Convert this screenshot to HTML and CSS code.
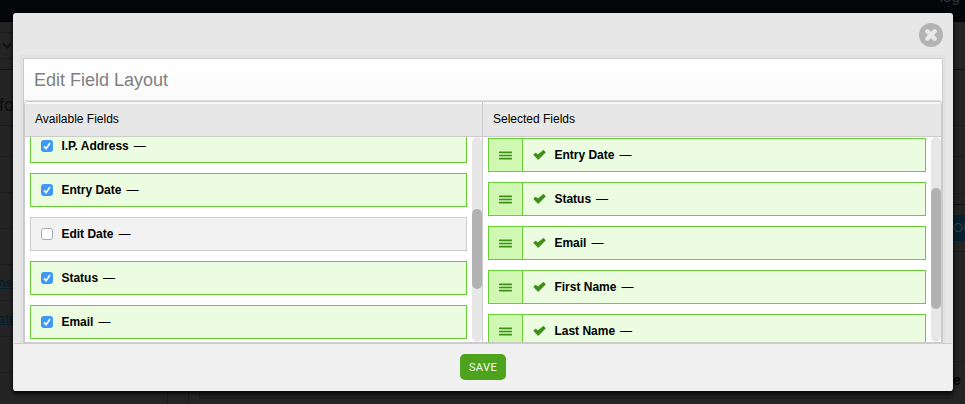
FILE: index.html
```
<!DOCTYPE html>
<html lang="en">
<head>
<meta charset="utf-8">
<title>Edit Field Layout</title>
<link rel="stylesheet" href="styles.css">
</head>
<body>
<svg class="defs" aria-hidden="true">
  <symbol id="check" viewBox="0 0 13 10"><path d="M1.1 4.9 L2.7 3.4 L4.9 5.3 L10.4 .7 L12 2.4 L5.2 9.1 Z" fill="#3f9019" stroke="#3f9019" stroke-width="1.3" stroke-linejoin="round"/></symbol>
  <symbol id="bars" viewBox="0 0 13 9"><path d="M.6 1.4h11.8M.6 4.5h11.8M.6 7.6h11.8" stroke="#3f9019" stroke-width="1.6" stroke-linecap="round"/></symbol>
  <symbol id="tick" viewBox="0 0 12 12"><path d="M3 6.4 L5.1 8.7 L9 3" fill="none" stroke="#fff" stroke-width="1.6"/></symbol>
</svg>
<div class="page">
  <header class="topbar"><span>log</span></header>
  <div class="page-body">
    <aside class="rail left">
      <div class="strip h11"></div>
      <div class="strip h26"><svg width="12" height="8" viewBox="0 0 12 8"><path d="M3 1.5 L7 5.5 L11 1.5" fill="none" stroke="#101010" stroke-width="2"/></svg></div>
      <div class="strip h11 dark"></div>
      <div class="strip h56 dotted"><b class="heading">fo</b></div>
      <div class="strip h31"></div><div class="strip h36"></div><div class="strip h36"></div><div class="strip h36"></div>
      <div class="strip h36"><a>ns</a></div><div class="strip h36"><a>ate</a></div><div class="strip h36"></div>
    </aside>
    <main class="canvas"><div class="gutter narrow"></div><div class="gutter"></div><div class="block"></div></main>
    <aside class="rail right">
      <div class="strip h48 dark"></div><div class="strip h56 dotted"></div><div class="strip h31"></div><div class="strip h37"></div>
      <div class="strip h11 dark"></div><div class="cta"><span>OU</span></div><div class="strip h10 dotted"></div><div class="strip h110"></div><div class="strip tail"><b>e</b></div>
    </aside>
  </div>
</div>
<section class="modal">
  <div class="modal-top">
    <button class="close" aria-label="Close"><svg width="24" height="24" viewBox="0 0 24 24"><circle cx="12" cy="12" r="12" fill="#b3b3b3"/><path d="M8.3 8.3 L15.7 15.7 M15.7 8.3 L8.3 15.7" stroke="#e8e8e8" stroke-width="4.4" stroke-linecap="round"/></svg></button>
  </div>
  <div class="panel">
    <h1>Edit Field Layout</h1>
    <div class="columns">
      <section class="column available">
        <h2>Available Fields</h2>
        <div class="viewport">
          <div class="list">
            <div class="field"><i class="box on"><svg><use href="#tick"/></svg></i><b>I.P. Address</b><span>—</span></div>
            <div class="field"><i class="box on"><svg><use href="#tick"/></svg></i><b>Entry Date</b><span>—</span></div>
            <div class="field off"><i class="box"></i><b>Edit Date</b><span>—</span></div>
            <div class="field"><i class="box on"><svg><use href="#tick"/></svg></i><b>Status</b><span>—</span></div>
            <div class="field"><i class="box on"><svg><use href="#tick"/></svg></i><b>Email</b><span>—</span></div>
          </div>
          <div class="scroll"><div class="thumb"></div></div>
        </div>
      </section>
      <section class="column selected">
        <h2>Selected Fields</h2>
        <div class="viewport">
          <div class="list">
            <div class="field"><i class="handle"><svg><use href="#bars"/></svg></i><svg class="check"><use href="#check"/></svg><b>Entry Date</b><span>—</span></div>
            <div class="field"><i class="handle"><svg><use href="#bars"/></svg></i><svg class="check"><use href="#check"/></svg><b>Status</b><span>—</span></div>
            <div class="field"><i class="handle"><svg><use href="#bars"/></svg></i><svg class="check"><use href="#check"/></svg><b>Email</b><span>—</span></div>
            <div class="field"><i class="handle"><svg><use href="#bars"/></svg></i><svg class="check"><use href="#check"/></svg><b>First Name</b><span>—</span></div>
            <div class="field"><i class="handle"><svg><use href="#bars"/></svg></i><svg class="check"><use href="#check"/></svg><b>Last Name</b><span>—</span></div>
          </div>
          <div class="scroll"><div class="thumb"></div></div>
        </div>
      </section>
    </div>
  </div>
  <footer><button class="save">SAVE</button></footer>
</section>
</body>
</html>
```
FILE: styles.css
```
* { box-sizing: border-box; }
body { margin: 0; width: 965px; height: 404px; overflow: hidden; position: relative; font: 12px "Liberation Sans", Arial, sans-serif; color: #000; }
.defs { position: absolute; width: 0; height: 0; }
.page { height: 404px; background: #242424; }
.topbar { height: 22px; background: #04060a; border-bottom: 1px solid #000; color: #343434; text-align: right; padding-right: 5px; overflow: hidden; }
.topbar span { display: block; font-size: 15px; line-height: 16px; margin-top: -11px; letter-spacing: .2px; }
.page-body { display: flex; height: 382px; }
.rail { overflow: hidden; flex: none; }
.left { width: 13px; }
.right { width: 12px; }
.strip { border-bottom: 1px solid #1d1d1d; overflow: hidden; white-space: nowrap; }
.h10 { height: 11px; }
.h11 { height: 11px; }
.h26 { height: 26px; padding-top: 9px; }
.h26 svg { display: block; }
.h31 { height: 31px; }
.h36 { height: 36px; }
.h37 { height: 37px; }
.h48 { height: 48px; }
.h56 { height: 56px; }
.h110 { height: 110px; }
.dark { border-color: #121212; }
.dotted { border-bottom-style: dotted; border-color: #121212; }
.heading { display: block; font-weight: 400; font-size: 18px; color: #0c0c0c; margin-top: 25px; line-height: 20px; margin-left: -1px; }
.left a { display: block; color: #061d2b; font-weight: 700; font-size: 12px; line-height: 14px; text-decoration: underline; padding-top: 11px; margin-left: -2px; }
.canvas { flex: 1; display: flex; padding-top: 369px; }
.gutter { width: 21px; border-right: 1px solid #1b1b1b; }
.narrow { width: 155px; }
.block { flex: 1; height: 8px; margin-left: 10px; border-left: 1px solid #1b1b1b; border-bottom: 1px solid #1b1b1b; background: #202020; }
.cta { height: 26px; margin-top: 10px; background: #062031; color: #353b40; font-size: 13px; line-height: 26px; overflow: hidden; }
.tail { height: 60px; padding-top: 9px; color: #000; font-size: 14px; line-height: 18px; border: 0; }
.modal { position: absolute; left: 13px; top: 13px; width: 940px; height: 378px; border-radius: 3px; background: #e7e7e7; box-shadow: 0 2px 5px #000; display: flex; flex-direction: column; overflow: hidden; }
.modal-top { height: 45px; flex: none; display: flex; justify-content: flex-end; padding: 10px 10px 0 0; }
button { border: 0; padding: 0; background: none; font-family: inherit; }
.close, .close svg { width: 24px; height: 24px; display: block; }
.panel { height: 285px; flex: none; margin: 0 10px; border: 1px solid #ccc; box-shadow: 0 0 0 3px #e2e2e2; background: #fafafa; }
h1 { margin: 0; height: 42px; padding: 0 10px; font-size: 18px; line-height: 42px; font-weight: 400; color: #808080; background: linear-gradient(#fff, #fafafa); border-bottom: 1px solid #dfdfdf; }
.columns { height: 241px; display: flex; border: 1px solid #ccc; border-bottom: 0; border-radius: 4px 4px 0 0; background: #fff; overflow: hidden; }
.column { width: 458px; flex: none; overflow: hidden; }
.available { border-right: 1px solid #ccc; }
h2 { margin: 0; height: 35px; border-top: 2px solid #f8f8f8; border-bottom: 1px solid #ccc; background: #e7e7e7; font-size: 12px; line-height: 30px; font-weight: 400; padding-left: 10px; }
.viewport { height: 205px; display: flex; overflow: hidden; }
.list { flex: 1; padding: 1px 5px 0; }
.available .list { margin-top: -9px; }
.field { height: 34px; margin-bottom: 10px; border: 1px solid #66cf35; background: #ebfce0; display: flex; align-items: center; line-height: 14px; white-space: nowrap; }
.off { border-color: #ccc; background: #f2f2f2; }
.field b { margin: 0 5px 0 .4px; }
.box { width: 12px; height: 12px; border-radius: 3px; margin: 0 8px 0 10px; border: 1px solid #aaa; background: #fff; flex: none; }
.box.on { border: 0; background: #3d98f7; }
.box svg { display: block; width: 12px; height: 12px; }
.handle { width: 34px; height: 32px; border-right: 1px solid #66cf35; background: #d1f8b3; display: flex; align-items: center; justify-content: center; flex: none; }
.handle svg { width: 13px; height: 9px; }
.check { width: 13px; height: 10px; margin: 0 8px 0 10px; flex: none; }
.scroll { display: flow-root; width: 10px; height: 205px; background: #e7e7e7; border-radius: 5px; flex: none; }
.thumb { margin-top: 72px; height: 80px; background: #b2b2b2; border-radius: 5px; }
.selected .thumb { margin-top: 51px; height: 121px; }
footer { flex: 1; margin: 0 1px; background: #f0f0f0; border-top: 1px solid #ccc; text-align: center; padding-top: 10px; }
.save { width: 46px; height: 26px; background: #4ea31e; border-radius: 5px; color: #f5fff0; font: 11px Roboto, sans-serif; letter-spacing: .4px; }
```
